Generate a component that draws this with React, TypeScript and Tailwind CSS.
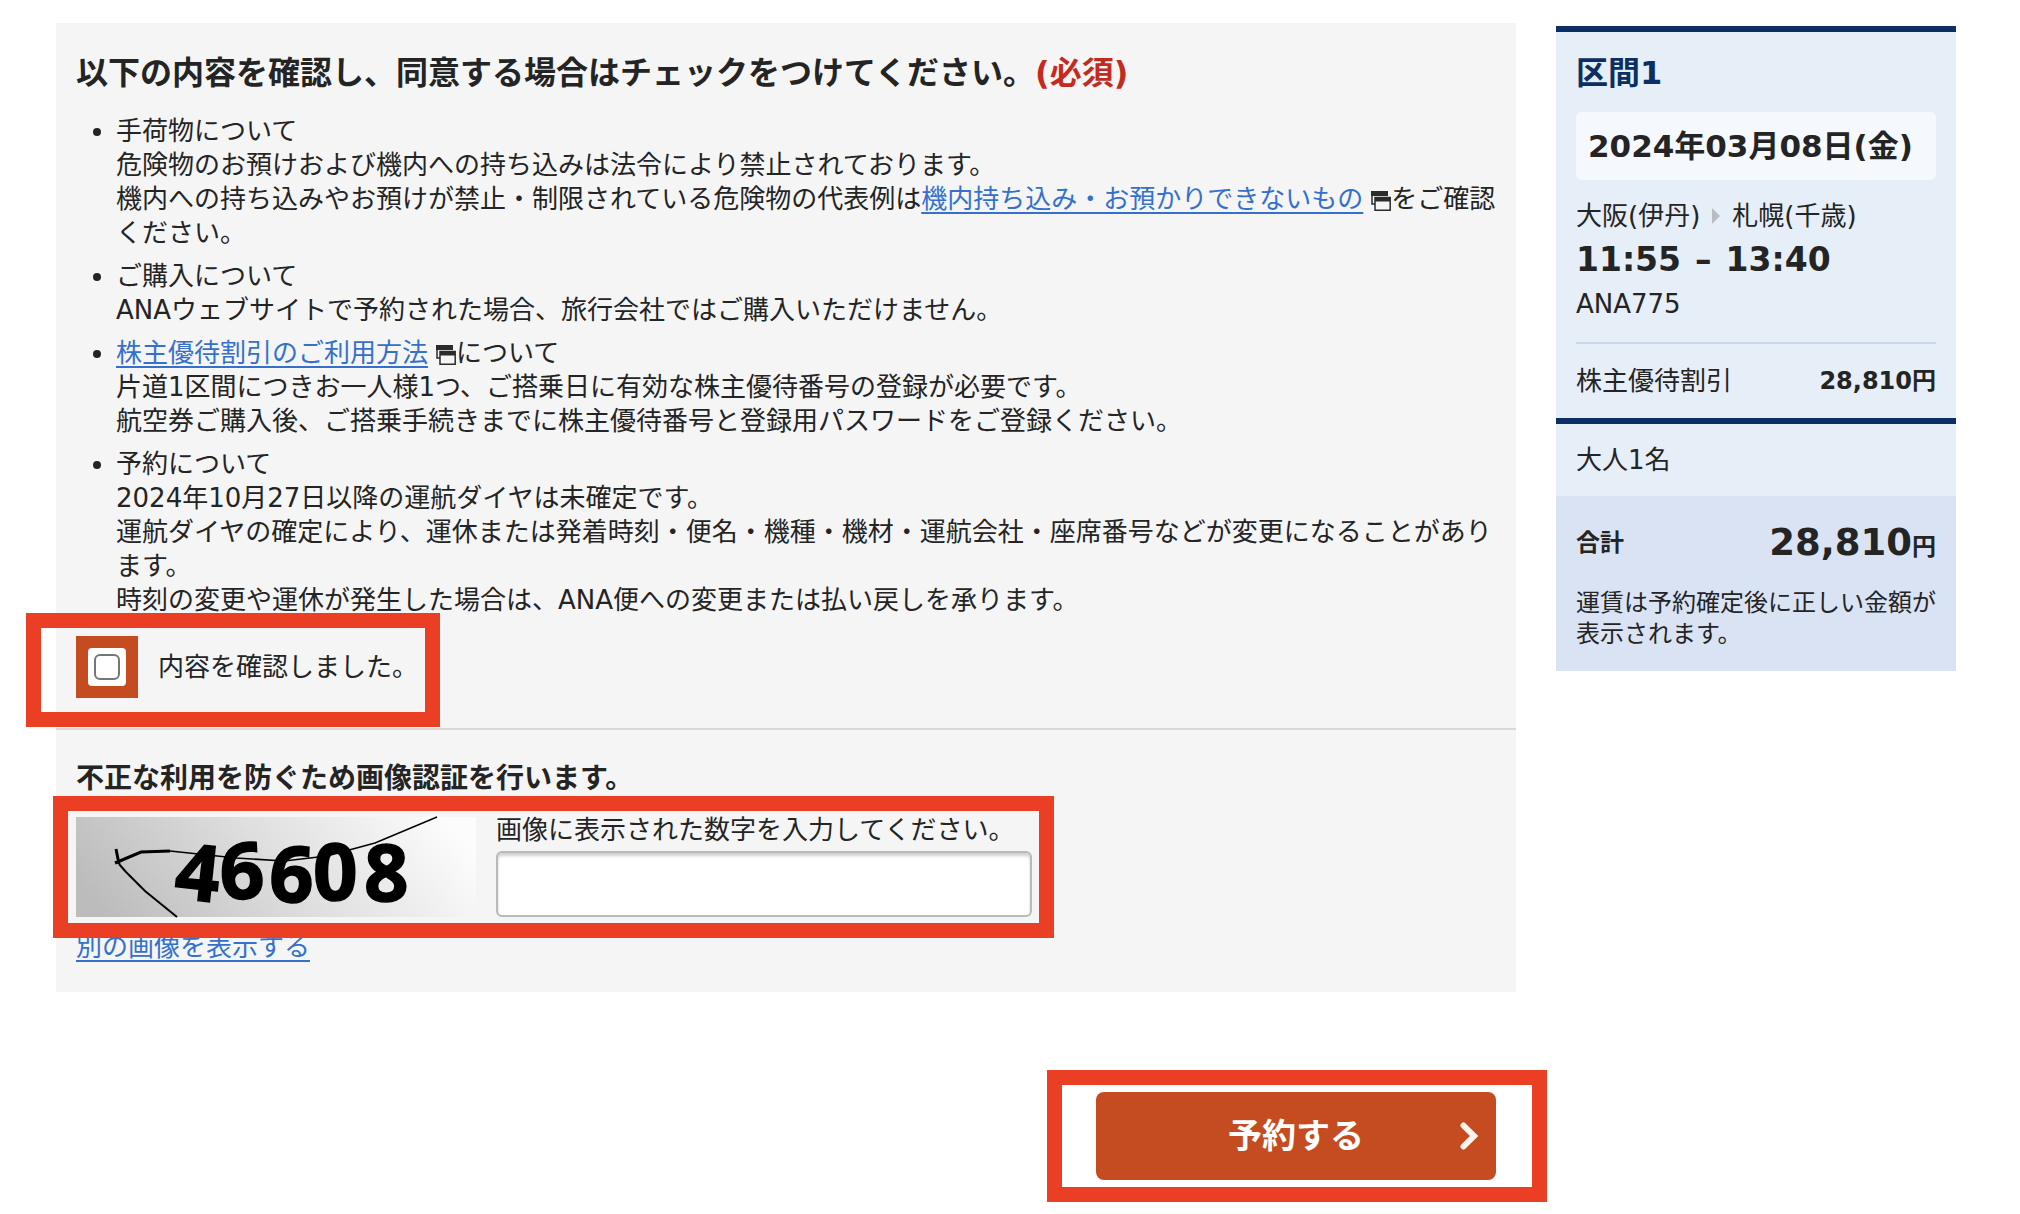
import React, { useState } from 'react';

const linkClass = 'text-[#3470cc] underline decoration-2 underline-offset-4';

function NewWindowIcon() {
  return (
    <svg viewBox="0 0 20 20" className="inline-block w-5 h-5 ml-2 align-[-3px]" aria-hidden="true">
      <path d="M1 1h15v4M1 1v12h3" fill="none" stroke="#2b2b2b" strokeWidth="1.5" />
      <path d="M0 0h17v5H0z" fill="#2b2b2b" />
      <path d="M4 6.5h15.2v12.8H4z" fill="#f5f5f5" stroke="#2b2b2b" strokeWidth="1.5" />
      <path d="M4 6.5h15v4H4z" fill="#2b2b2b" />
    </svg>);

}

function CaptchaImage() {
  return (
    <svg viewBox="0 0 400 100" className="w-[400px] h-[100px] shrink-0 overflow-visible" role="img" aria-label="画像認証">
      <defs>
        <linearGradient id="captcha-bg" x1="0" y1="0.6" x2="1" y2="0.4">
          <stop offset="0" stopColor="#bcbcbc" />
          <stop offset="0.5" stopColor="#dedede" />
          <stop offset="1" stopColor="#fcfcfc" />
        </linearGradient>
      </defs>
      <rect width="400" height="100" fill="url(#captcha-bg)" />
      <text
        x="97 145 192 237 288"
        y="81 83 84 83 84"
        rotate="6 -3 3 0 0"
        className="font-['Open_Sans'] font-bold text-[78px]"
        fill="#000"
        stroke="#000"
        strokeWidth="1.5">
        46608
      </text>
      <path d="M361 0L299 26L251 39L208 44L160 41L94 34" fill="none" stroke="#000" strokeWidth="1.5" />
      <path d="M94 34L65 35L39 46M40 32L43 47" fill="none" stroke="#000" strokeWidth="3" />
      <path d="M43 47L50 55L69 74L101 100" fill="none" stroke="#000" strokeWidth="2" />
    </svg>);

}

export default function App() {
  const [agreed, setAgreed] = useState(false);
  const [code, setCode] = useState('');

  return (
    <div className="min-h-screen bg-white text-[#242424] text-[26px] leading-[34px] font-['DejaVu_Sans','Noto_Sans_CJK_JP',sans-serif]">
      <div className="flex items-start gap-10 pl-14 pr-16 pt-[23px]" lang="ja">
        <main className="flex-1 min-w-0">
          <div className="bg-[#f5f5f5]">
            <section className="px-5 pt-[26px] pb-[30px] border-b-2 border-[#d8d8d8]">
              <h2 className="text-[32px] leading-[48px] font-bold">
                以下の内容を確認し、同意する場合はチェックをつけてください。<span className="text-[#c42b1f]">(必須)</span>
              </h2>

              <ul className="list-disc pl-10 mt-[17px] space-y-[9px]">
                <li>
                  手荷物について<br />
                  危険物のお預けおよび機内への持ち込みは法令により禁止されております。<br />
                  機内への持ち込みやお預けが禁止・制限されている危険物の代表例は<a href="#" className={linkClass}>機内持ち込み・お預かりできないもの</a><NewWindowIcon />をご確認ください。
                </li>
                <li>
                  ご購入について<br />
                  ANAウェブサイトで予約された場合、旅行会社ではご購入いただけません。
                </li>
                <li>
                  <a href="#" className={linkClass}>株主優待割引のご利用方法</a><NewWindowIcon />について<br />
                  片道1区間につきお一人様1つ、ご搭乗日に有効な株主優待番号の登録が必要です。<br />
                  航空券ご購入後、ご搭乗手続きまでに株主優待番号と登録用パスワードをご登録ください。
                </li>
                <li>
                  予約について<br />
                  2024年10月27日以降の運航ダイヤは未確定です。<br />
                  運航ダイヤの確定により、運休または発着時刻・便名・機種・機材・運航会社・座席番号などが変更になることがあります。<br />
                  時刻の変更や運休が発生した場合は、ANA便への変更または払い戻しを承ります。
                </li>
              </ul>

              <div className="relative w-fit mt-[19px]">
                <label className="flex items-center gap-5">
                  <span className="flex p-3 bg-[#c54c20]">
                    <span className="flex p-1.5 bg-white rounded">
                      <input
                        type="checkbox"
                        checked={agreed}
                        onChange={(e) => setAgreed(e.target.checked)}
                        className="appearance-none w-[26px] h-[26px] border-2 border-[#767676] rounded-md bg-white checked:bg-[#3470cc]" />
                    </span>
                  </span>
                  内容を確認しました。
                </label>
                <div className="absolute -top-[23px] -left-[50px] -right-[22px] -bottom-[29px] border-[15px] border-[#eb3f25] pointer-events-none" />
              </div>
            </section>

            <section className="px-5 pt-[29px] pb-7">
              <h3 className="text-[28px] leading-10 font-bold">
                不正な利用を防ぐため画像認証を行います。
              </h3>

              <div className="relative z-10 flex gap-5 w-fit mt-[18px]">
                <CaptchaImage />
                <div>
                  <label htmlFor="captcha" className="block leading-[26px]">
                    画像に表示された数字を入力してください。
                  </label>
                  <input
                    id="captcha"
                    type="text"
                    value={code}
                    onChange={(e) => setCode(e.target.value)}
                    className="block w-[536px] h-[66px] mt-2 px-4 bg-white border-2 border-[#b6baba] rounded-md shadow-[inset_0_3px_3px_rgba(0,0,0,0.18)]" />
                </div>
                <div className="absolute -inset-y-[21px] -left-[23px] -right-[22px] border-[15px] border-[#eb3f25] pointer-events-none" />
              </div>

              <a href="#" className={`inline-block mt-[13px] ${linkClass}`}>別の画像を表示する</a>
            </section>
          </div>

          <div className="relative w-[400px] ml-auto mr-5 mt-[100px]">
            <button
              type="button"
              className="relative block w-full h-[88px] bg-[#c54c20] text-white text-[34px] font-bold rounded-lg">
              予約する
              <svg viewBox="0 0 18 28" className="absolute right-[18px] top-[30px] w-[18px] h-7" aria-hidden="true">
                <path d="M3.5 3.5L14 14L3.5 24.5" fill="none" stroke="#fdf3ef" strokeWidth="6" strokeLinecap="round" />
              </svg>
            </button>
            <div className="absolute -inset-y-[22px] -left-[49px] -right-[51px] border-[15px] border-[#eb3f25] pointer-events-none" />
          </div>
        </main>

        <aside className="w-[400px] shrink-0 mt-[3px] bg-[#e6eef7]">
          <section className="px-5 pt-[17px] border-y-[6px] border-[#0c2f63]">
            <h2 className="text-[32px] leading-[48px] font-bold text-[#0c2f63]">区間1</h2>
            <p className="mt-[15px] h-[68px] px-3 leading-[68px] text-[31px] font-bold whitespace-nowrap bg-[#f5f8fd] rounded-md">
              2024年03月08日(金)
            </p>
            <div className="pb-[18px] mt-4 border-b-2 border-[#cbd5ed]">
              <p className="flex items-center leading-10">
                大阪(伊丹)
                <svg viewBox="0 0 8 16" className="w-2 h-4 mx-3" aria-hidden="true">
                  <path d="M0 0L8 8L0 16z" fill="#b9bcc0" />
                </svg>
                札幌(千歳)
              </p>
              <p className="flex gap-[14px] text-[33px] leading-[48px] font-bold">
                <span>11:55</span>
                <span>–</span>
                <span>13:40</span>
              </p>
              <p className="leading-10">ANA775</p>
            </div>
            <div className="flex items-center justify-between h-[74px]">
              <span>株主優待割引</span>
              <span className="text-[24px] font-bold">28,810円</span>
            </div>
          </section>

          <p className="px-5 leading-[72px]">大人1名</p>

          <section className="px-5 pt-[23px] pb-[21px] bg-[#dae3f3]">
            <div className="flex items-center justify-between h-12 font-bold">
              <span className="text-[24px]">合計</span>
              <span className="text-[37px] leading-[48px]">28,810<span className="text-[24px] leading-none">円</span></span>
            </div>
            <p className="mt-[21px] text-[24px] leading-[31px]">
              運賃は予約確定後に正しい金額が表示されます。
            </p>
          </section>
        </aside>
      </div>
    </div>);

}
